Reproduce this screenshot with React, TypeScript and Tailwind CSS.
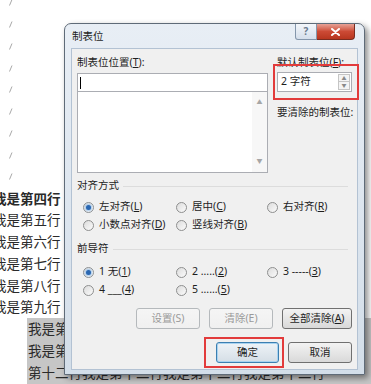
import React from 'react';

const FONT = "font-['Noto_Sans','Noto_Sans_CJK_SC',sans-serif]";

function Radio({ checked = false, label }: { checked?: boolean; label: React.ReactNode }) {
  return (
    <div className="flex items-center h-[18px]">
      <span className="w-[11px] h-[11px] rounded-full border border-[#8e8f8f] bg-linear-to-br from-[#dcdcdc] to-[#fbfbfb] flex items-center justify-center">
        {checked && <span className="w-[5px] h-[5px] rounded-full bg-[#2a67b1] shadow-[0_0_2px_1px_#9cc3ea]" />}
      </span>
      <span className="ml-[5px] whitespace-nowrap">{label}</span>
    </div>
  );
}

function Btn({ children, w, disabled = false, primary = false }: { children: React.ReactNode; w: string; disabled?: boolean; primary?: boolean }) {
  let cls = 'border-[#707070] from-[#f3f3f3] to-[#d9d9d9] text-[#1e1e1e]';
  if (disabled) cls = 'border-[#b5b9bc] from-[#f5f5f5] to-[#f0f0f0] text-[#9a9a9a]';
  if (primary) cls = 'border-[#3c7fb1] from-[#eef3f7] to-[#d5dee6] text-[#1e1e1e] shadow-[inset_0_0_0_1px_#a9d3f0]';
  return (
    <div className={`${w} h-[21px] rounded-[3px] border bg-linear-to-b ${cls} flex items-center justify-center`}>
      {children}
    </div>
  );
}

function Header({ text }: { text: string }) {
  return (
    <div className="flex items-center h-[14px] pr-[5px]">
      <span className="whitespace-nowrap">{text}</span>
      <div className="flex-1 ml-[4px] h-px bg-[#dcdcdc]" />
    </div>
  );
}

function Dialog() {
  return (
    <div className={`absolute left-[64px] top-[23px] w-[301px] h-[352px] rounded-t-[7px] border border-[#5f6b78] bg-linear-to-b from-[#e8eef5] to-[#d3dee9] shadow-[3px_3px_6px_rgba(0,0,0,0.45)] flex flex-col text-[10.5px] text-[#1e1e1e] ${FONT}`}>
      <div className="h-[24px] flex items-start">
        <span className="pl-[7px] leading-[24px] text-[#1e1e1e]">制表位</span>
        <div className="ml-auto mr-[9px] flex">
          <div className="w-[22px] h-[16px] rounded-bl-[3px] border border-t-0 border-[#8496ab] bg-linear-to-b from-[#f3f6fa] to-[#d5dfeb] flex items-center justify-center text-[10px] font-bold text-[#6a7a8e]">?</div>
          <div className="w-[38px] h-[16px] rounded-br-[4px] border border-t-0 border-l-0 border-[#7a2c20] bg-linear-to-b from-[#e6a196] via-[#cc4a35] to-[#b8361f] flex items-center justify-center">
            <svg width="9" height="8" viewBox="0 0 9 8">
              <path d="M1 1L8 7M8 1L1 7" stroke="#fff" strokeWidth="2" strokeLinecap="round" />
            </svg>
          </div>
        </div>
      </div>
      <div className="mx-[6px] mb-[4px] flex-1 bg-[#f0f0f0] border border-[#b3c2d3] pl-[5px] pr-[4px] pt-[6px] flex flex-col">
        <div className="flex gap-[9px]">
          <div className="w-[191px] flex flex-col">
            <div className="h-[14px] leading-[14px]">制表位位置(<u className="underline-offset-1">T</u>):</div>
            <div className="mt-[4px] h-[19px] bg-white border border-[#abadb3] flex items-center pl-[2px]">
              <div className="w-px h-[12px] bg-black" />
            </div>
            <div className="h-[81px] bg-white border border-t-0 border-[#abadb3] flex">
              <div className="flex-1" />
              <div className="w-[15px] bg-[#f7f7f7] flex flex-col items-center justify-between py-[6px] text-[6px] text-[#a6a6a6]">
                <span>▲</span>
                <span>▼</span>
              </div>
            </div>
          </div>
          <div className="w-[75px] flex flex-col">
            <div className="h-[14px] leading-[14px] whitespace-nowrap">默认制表位(<u className="underline-offset-1">F</u>):</div>
            <div className="relative mt-[3px] h-[20px] bg-white border border-[#abadb3] flex items-center pl-[3px]">
              <span>2 字符</span>
              <div className="ml-auto mr-[1px] flex flex-col w-[12px]">
                <div className="h-[8px] border border-[#c5c5c5] bg-[#f4f4f4] flex items-center justify-center text-[5px] text-[#8a8a8a] leading-none">▲</div>
                <div className="h-[8px] border border-t-0 border-[#c5c5c5] bg-[#f4f4f4] flex items-center justify-center text-[5px] text-[#8a8a8a] leading-none">▼</div>
              </div>
              <div className="absolute left-[-5px] right-[-8px] top-[-9px] bottom-[-9px] border-2 border-[#e23b3b]" />
            </div>
            <div className="mt-[13px] h-[14px] leading-[14px] whitespace-nowrap">要清除的制表位:</div>
          </div>
        </div>

        <div className="mt-[6px]">
          <Header text="对齐方式" />
        </div>
        <div className="mt-[5px] ml-[6px] grid grid-cols-[93px_91px_1fr]">
          <Radio checked label={<>左对齐(<u>L</u>)</>} />
          <Radio label={<>居中(<u>C</u>)</>} />
          <Radio label={<>右对齐(<u>R</u>)</>} />
          <Radio label={<>小数点对齐(<u>D</u>)</>} />
          <Radio label={<>竖线对齐(<u>B</u>)</>} />
        </div>

        <div className="mt-[8px]">
          <Header text="前导符" />
        </div>
        <div className="mt-[7px] ml-[6px] grid grid-cols-[93px_91px_1fr]">
          <Radio checked label={<>1 无(<u>1</u>)</>} />
          <Radio label={<>2 .....(<u>2</u>)</>} />
          <Radio label={<>3 -----(<u>3</u>)</>} />
          <Radio label={<>4 ___(<u>4</u>)</>} />
          <Radio label={<>5 ......(<u>5</u>)</>} />
        </div>

        <div className="mt-[9px] flex justify-end gap-[9px] pr-[1px]">
          <Btn w="w-[64px]" disabled>设置(S)</Btn>
          <Btn w="w-[64px]" disabled>清除(E)</Btn>
          <Btn w="w-[70px]">全部清除(<u>A</u>)</Btn>
        </div>
        <div className="mt-[13px] flex justify-end gap-[9px] pr-[1px]">
          <div className="relative">
            <Btn w="w-[63px]" primary>确定</Btn>
            <div className="absolute left-[-12px] right-[-5px] top-[-5px] bottom-[-5px] border-2 border-[#e23b3b]" />
          </div>
          <Btn w="w-[64px]">取消</Btn>
        </div>
      </div>
    </div>
  );
}

function Mark() {
  return (
    <svg width="5" height="7" viewBox="0 0 5 7" className="ml-[8px]">
      <path d="M4 0.5L1.5 6.5" stroke="#a8a8a8" strokeWidth="1" />
    </svg>
  );
}

export default function App() {
  const plain = ['我是第五行', '我是第六行', '我是第七行', '我是第八行', '我是第九行'];
  const picked = ['我是第十行', '我是第十一行', '第十二行我是第十二行我是第十二行我是第十二行'];
  return (
    <div className={`relative w-[371px] h-[384px] overflow-hidden bg-white ${FONT}`}>
      <div className="mt-[-8px] flex flex-col text-[13.5px] text-[#2a2a2a]">
        {Array.from({ length: 9 }).map((_, i) => (
          <div key={i} className="h-[21.75px] flex items-center">
            <Mark />
          </div>
        ))}
        <div className="h-[21.75px] flex items-center ml-[-7px] font-bold whitespace-nowrap">我是第四行</div>
        {plain.map(t => (
          <div key={t} className="h-[21.75px] flex items-center ml-[-7px] whitespace-nowrap">{t}</div>
        ))}
        {picked.map(t => (
          <div key={t} className="h-[21.75px] flex items-center ml-[27px] pl-[1px] bg-[#c6c6c6] whitespace-nowrap">{t}</div>
        ))}
      </div>
      <Dialog />
    </div>
  );
}
